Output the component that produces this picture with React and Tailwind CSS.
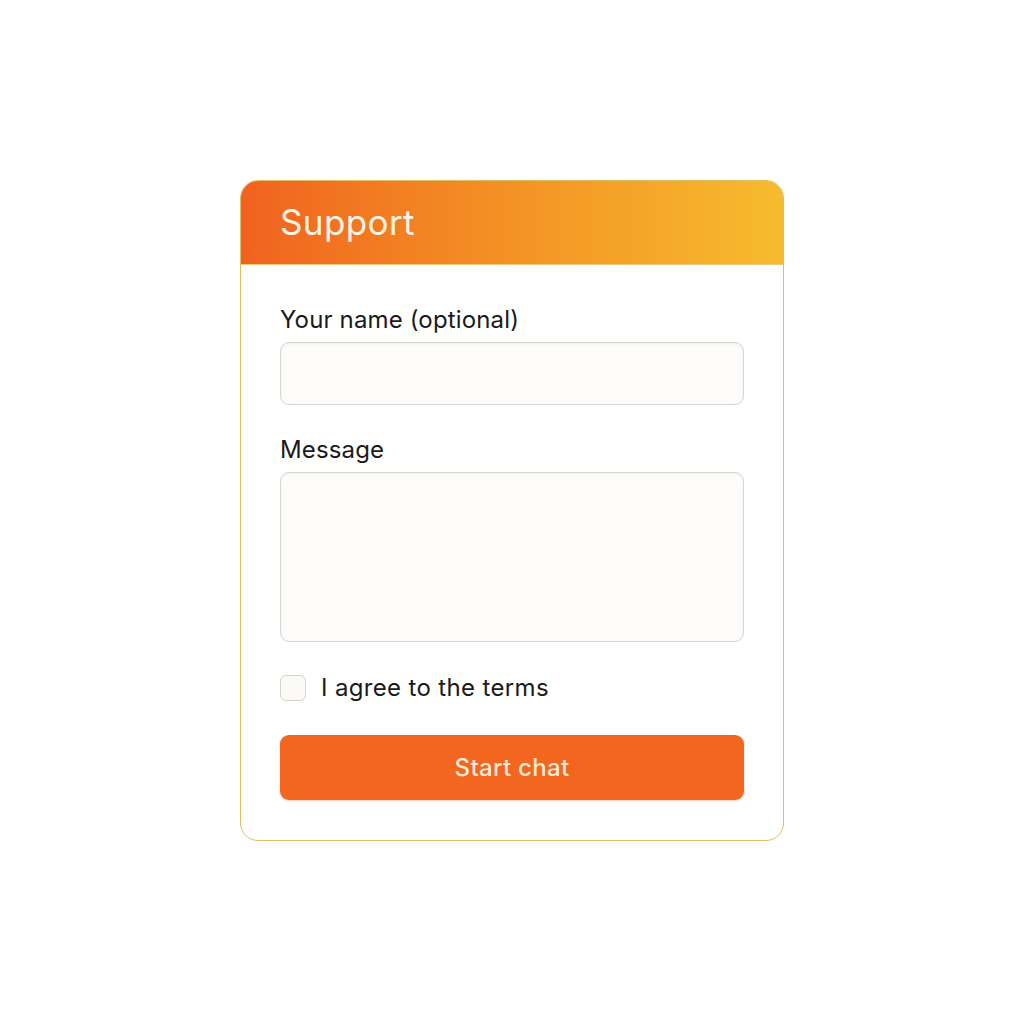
import React, { useState } from "react";

const App = () => {
  const [agree, setAgree] = useState(false);
  return (
    <div
      className="min-h-screen w-full bg-white flex items-start justify-center pt-[180px]"
      style={{ fontFamily: "Inter, 'Noto Sans', sans-serif" }}
    >
      <div className="w-[544px] h-[661px] rounded-[18px] border-[1.5px] border-[#e3bd62] bg-white overflow-hidden flex flex-col">
        <div className="h-[84px] shrink-0 bg-gradient-to-r from-[#f0621f] via-[#f39224] to-[#f6bb2e] flex items-center px-[39px] border-b border-[#f3c77a]">
          <h1 className="text-[35px] text-[#fff4e4] tracking-[0.4px] leading-none">
            Support
          </h1>
        </div>
        <form className="flex flex-col px-[39px] pt-[41px]">
          <label className="text-[24px] leading-[28px] tracking-[0.15px] text-[#1a1a1a]">
            Your name (optional)
          </label>
          <input
            type="text"
            className="mt-[8px] h-[63px] w-full rounded-[9px] border border-[#d9d6d0] bg-[#fdfcfa] shadow-[inset_0_1px_3px_rgba(0,0,0,0.05)] px-4 text-[20px] outline-none"
          />
          <label className="mt-[31px] text-[24px] leading-[28px] tracking-[0.15px] text-[#1a1a1a]">
            Message
          </label>
          <textarea className="mt-[8px] h-[170px] w-full resize-none rounded-[9px] border border-[#d9d6d0] bg-[#fdfcfa] shadow-[inset_0_1px_3px_rgba(0,0,0,0.05)] px-4 py-3 text-[20px] outline-none" />
          <label className="mt-[32px] flex items-center gap-[15px] cursor-pointer">
            <input
              type="checkbox"
              checked={agree}
              onChange={(e) => setAgree(e.target.checked)}
              className="appearance-none w-[26px] h-[26px] rounded-[6px] border border-[#d6d3cd] bg-[#fbfaf6] checked:bg-[#f26522]"
            />
            <span className="text-[24px] leading-[28px] tracking-[0.35px] text-[#1a1a1a]">
              I agree to the terms
            </span>
          </label>
          <button
            type="button"
            className="mt-[33px] h-[65px] w-full rounded-[9px] bg-[#f2661f] text-[24px] font-medium tracking-[0.3px] text-[#fde9d4] shadow-[0_1px_2px_rgba(200,80,20,0.3)]"
          >
            Start chat
          </button>
        </form>
      </div>
    </div>
  );
};

export default App;
